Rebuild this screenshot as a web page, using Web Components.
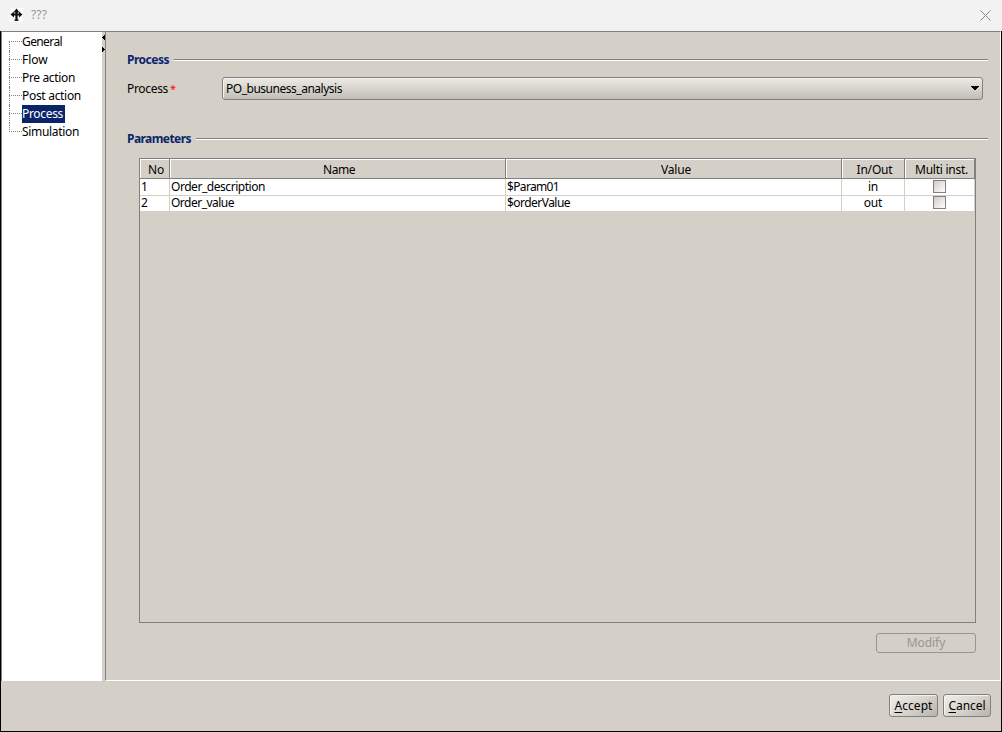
<!DOCTYPE html>
<html lang="en"><head><meta charset="utf-8"><title>Process properties</title>
<style>
html,body{margin:0;height:100%;overflow:hidden}
body{font:12px/16px "Noto Sans","Open Sans",sans-serif;color:#000;background:#d4d0c8}
</style></head><body>
<app-dialog></app-dialog>
<script>
const define=(name,html,setup)=>customElements.define(name,class extends HTMLElement{
  connectedCallback(){
    if(this.shadowRoot)return;
    const t=document.createElement('template');t.innerHTML=html;
    this.attachShadow({mode:'open'}).append(t.content.cloneNode(true));
    if(setup)setup(this,this.shadowRoot);
  }
});
// Text run with a fixed advance width; tracking absorbs font differences.
define('ui-text',`<style>:host{display:inline-block;white-space:pre;line-height:16px;flex:none;text-align:left}span{display:inline-block}</style><span><slot></slot></span>`,(el,root)=>{
  const w=parseFloat(el.getAttribute('w')),s=root.querySelector('span'),n=el.textContent.length;
  el.style.width=w+'px';
  const fit=()=>{s.style.letterSpacing='0px';const d=w-s.getBoundingClientRect().width;s.style.letterSpacing=(d/n)+'px'};
  fit();requestAnimationFrame(fit);
});
define('title-bar',`<style>:host{display:flex;height:31px;box-sizing:border-box;background:#f2f2f2;align-items:center;padding:0 11px 1px 10px;color:#999}
ui-text{margin-left:8px}.x{margin-left:auto}svg{display:block}</style>
<svg width="13" height="14" viewBox="0 0 13 14"><rect width="13" height="14" fill="#fafafa"/><path d="M6.5 2v11M2 6.5h9" stroke="#111" stroke-width="2.2"/><path d="M6.5 .5 3.5 4.5h6zM.5 6.5l3.5-3v6zM12.5 6.5l-3.5-3v6zM4.5 12.8v-1.2h4v1.2z" fill="#111"/></svg>
<ui-text w="16">???</ui-text>
<svg class="x" width="11" height="11" viewBox="0 0 11 11"><path d="M.5.5l10 10M10.5.5l-10 10" stroke="#858585" fill="none"/></svg>`);
define('tree-item',`<style>:host{display:flex;height:18px;padding-left:7px;position:relative}
i{width:13px;height:9px;box-sizing:border-box;border-bottom:1px dotted #808080;flex:none}
b{position:absolute;left:7px;top:0;height:18px;border-left:1px dotted #808080}
:host([first]) b{top:8px;height:10px}
:host([last]) b{height:9px}
span{height:18px;box-sizing:border-box;padding:1px 2px 0 0}
:host([selected]) span{background:#0a246a;color:#fff}</style><b></b><i></i><span><slot></slot></span>`);
define('side-tree',`<style>:host{display:block;width:102px;box-sizing:border-box;background:#fff;border-left:1px solid #808080;border-top:1px solid #808080;padding-top:1px}</style>
<tree-item first><ui-text w="40">General</ui-text></tree-item>
<tree-item><ui-text w="25.5">Flow</ui-text></tree-item>
<tree-item><ui-text w="53">Pre action</ui-text></tree-item>
<tree-item><ui-text w="59">Post action</ui-text></tree-item>
<tree-item selected><ui-text w="41">Process</ui-text></tree-item>
<tree-item last><ui-text w="57">Simulation</ui-text></tree-item>`);
define('split-bar',`<style>:host{display:block;width:3px;border-top:1px solid #808080;box-sizing:border-box}svg{display:block}</style>
<svg width="3" height="24" viewBox="0 0 3 24" shape-rendering="crispEdges"><path d="M2 3h1v5H2V7H1V6H0V5h1V4h1zM0 15h1v1h1v1h1v1H2v1H1v1H0z"/></svg>`);
define('group-title',`<style>:host{display:flex;height:16px;font-weight:700;color:#0a246a;gap:5px}i{flex:1;height:1px;background:#808080;border-bottom:1px solid #fff;margin-top:8px}::slotted(ui-text){margin-top:1px}</style><slot></slot><i></i>`);
define('combo-box',`<style>:host{display:flex;box-sizing:border-box;width:761px;height:23px;border:1px solid #808080;border-radius:3px;background:linear-gradient(#eceae5,#d8d5ce 50%,#c0bdb6);padding:3px 3px 0;box-shadow:inset 1px 1px #f5f4f0}svg{margin:5px 0 0 auto}</style><slot></slot>
<svg width="8" height="5" viewBox="0 0 8 5" shape-rendering="crispEdges"><path d="M0 0h8v1H7v1H6v1H5v1H3V3H2V2H1V1H0z"/></svg>`);
define('check-box',`<style>:host{display:block;box-sizing:border-box;width:13px;height:13px;border:1px solid #808080;background:linear-gradient(135deg,#d0ccc4,#fff)}</style>`);
define('param-table',`<style>:host{display:block;box-sizing:border-box;width:837px;height:465px;border:1px solid #808080}
.r{display:grid;grid-template-columns:30px 336px 336px 63px 70px;height:16px;background:#fff}
.r>div{box-sizing:border-box;border-right:1px solid #d4d0c8;border-bottom:1px solid #d4d0c8;padding-left:1px;display:flex;align-items:flex-start}
.r:last-child>div{border-bottom-color:#d4d0c8}
.r>.c{justify-content:center}.r>.c ui-text{margin-left:-1px}
.h{height:20px;background:#d4d0c8}.h>div{border-color:#808080;box-shadow:inset 1px 1px #fff;justify-content:center;padding:3px 0 0 3px}
check-box{margin:1px 1px 0 0}</style>
<div class="r h"><div><ui-text w="16">No</ui-text></div><div><ui-text w="32">Name</ui-text></div><div style="padding-left:5px"><ui-text w="30">Value</ui-text></div><div><ui-text w="36">In/Out</ui-text></div><div style="padding-left:4px"><ui-text w="53">Multi inst.</ui-text></div></div>
<div class="r"><div><ui-text w="7">1</ui-text></div><div><ui-text w="94">Order_description</ui-text></div><div><ui-text w="52">$Param01</ui-text></div><div class="c"><ui-text w="10">in</ui-text></div><div class="c"><check-box></check-box></div></div>
<div class="r"><div><ui-text w="7">2</ui-text></div><div><ui-text w="63">Order_value</ui-text></div><div><ui-text w="63">$orderValue</ui-text></div><div class="c"><ui-text w="18.5">out</ui-text></div><div class="c"><check-box></check-box></div></div>`);
define('push-button',`<style>:host{display:flex;box-sizing:border-box;height:23px;width:var(--w,49px);border:1px solid #808080;border-radius:3px;justify-content:center;align-items:center;background:linear-gradient(145deg,#f0eeea,#d8d5ce 50%,#b8b4ac);box-shadow:inset 1px 1px #f5f4f0}
:host([disabled]){height:20px;background:none;box-shadow:none;border-color:#99958f;color:#99958f}</style><slot></slot>`);
define('process-panel',`<style>:host{display:block;flex:1;box-sizing:border-box;border:1px solid #808080;border-right-color:#fff;border-bottom-color:#fff;padding:19px 12px 0 21px}
.f{display:flex;height:23px;margin-top:10px}.f>ui-text{margin-top:4px}.f>.s{color:red;margin-left:2px;font-size:11px}combo-box{margin-left:46px}
.p{margin-top:30px}param-table{margin:12px 0 0 12px}push-button{--w:100px;margin:10px 0 0 749px}</style>
<group-title><ui-text w="42">Process</ui-text></group-title>
<div class="f"><ui-text w="41">Process</ui-text><ui-text class="s" w="6">*</ui-text><combo-box><ui-text w="116">PO_busuness_analysis</ui-text></combo-box></div>
<group-title class="p"><ui-text w="64">Parameters</ui-text></group-title>
<param-table></param-table>
<push-button disabled><ui-text w="38.5">Modify</ui-text></push-button>`);
define('app-dialog',`<style>:host{display:flex;flex-direction:column;width:1002px;height:732px}
main{display:flex;flex-direction:column;flex:1;border:solid #000;border-width:0 1px 1px}
.b{display:flex;height:650px}side-tree{width:101px}
footer{display:flex;justify-content:flex-end;gap:5px;padding:13px 10px 0 0}
u{text-decoration:underline;text-underline-offset:2px}</style>
<title-bar></title-bar><main><div class="b"><side-tree></side-tree><split-bar></split-bar><process-panel></process-panel></div>
<footer><push-button><ui-text w="38"><u>A</u>ccept</ui-text></push-button><push-button style="--w:48px"><ui-text w="37"><u>C</u>ancel</ui-text></push-button></footer></main>`);
</script></body></html>
